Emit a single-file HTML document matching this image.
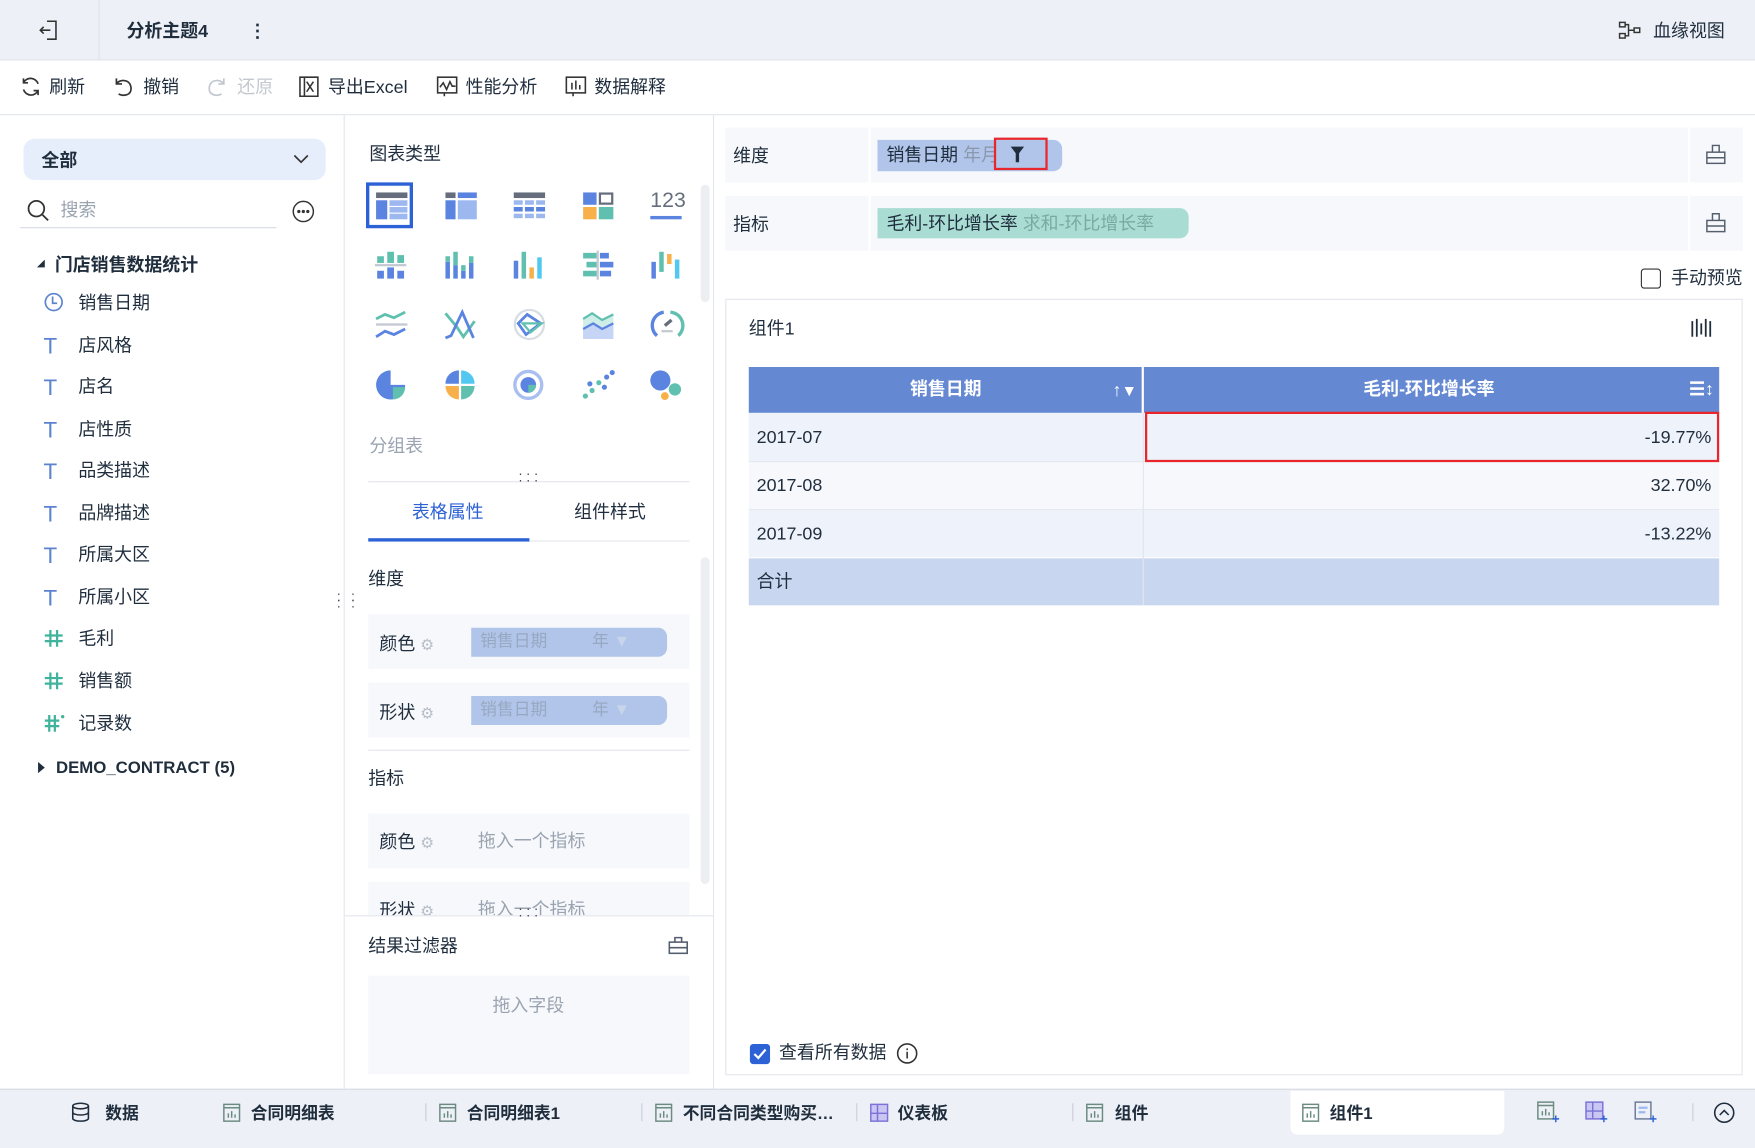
<!DOCTYPE html>
<html><head><meta charset="utf-8">
<style>
*{box-sizing:border-box;margin:0;padding:0}
html,body{width:1755px;height:1148px;overflow:hidden;background:#fff}
#w{position:absolute;left:0;top:0;width:1568px;height:1026px;transform:scale(1.11926,1.11891);transform-origin:0 0;font-family:"Liberation Sans","Noto Sans CJK SC",sans-serif;color:#1f2d3d;font-size:16px}
.a{position:absolute;white-space:nowrap}
.t{line-height:24px}
svg{position:absolute;overflow:visible}
.gray{color:#9aa3b0}
.row{position:absolute;background:#f6f8fc}
.pill{position:absolute;background:#b0c5e9;border-radius:0 8px 8px 0;color:#98a8c2;font-size:15px;line-height:26px}
.ti{position:absolute;left:35px;width:20px;text-align:center;color:#5b83d0;font-size:20px;line-height:24px}
.tab{position:absolute;top:985px;font-weight:bold;font-size:15px;line-height:22px}
</style></head><body><div id="w">

<!-- top bar -->
<div class="a" style="left:0;top:0;width:1568px;height:54px;background:#edf0f6;border-bottom:1px solid #dfe3ea"></div>
<div class="a" style="left:88px;top:0;width:1px;height:54px;background:#dfe3ea"></div>
<svg style="left:35px;top:18px" width="18" height="18" viewBox="0 0 18 18" fill="none" stroke="#333" stroke-width="1.4"><path d="M7 1h8v16H7M1 9h9M4 6L1 9l3 3"/></svg>
<div class="a t" style="left:113px;top:17px;font-weight:bold;font-size:16px">分析主题4</div>
<div class="a t" style="left:222px;top:17px;font-weight:bold">⋮</div>
<svg style="left:1446px;top:19px" width="20" height="16" viewBox="0 0 20 16" fill="none" stroke="#333" stroke-width="1.3"><rect x="1" y="1" width="5" height="4"/><rect x="1" y="11" width="5" height="4"/><rect x="14" y="6" width="5" height="4"/><path d="M6 3h3v10H6M9 8h5"/></svg>
<div class="a t" style="left:1477px;top:17px">血缘视图</div>

<!-- toolbar -->
<div class="a" style="left:0;top:102px;width:1568px;height:1px;background:#e3e6ec"></div>
<svg style="left:18px;top:68px" width="19" height="19" viewBox="0 0 19 19" fill="none" stroke="#333" stroke-width="1.5"><path d="M16 7A7 7 0 0 0 3 6M3 12a7 7 0 0 0 13 1M3 2v4h4M16 17v-4h-4"/></svg>
<div class="a t" style="left:44px;top:67px">刷新</div>
<svg style="left:101px;top:68px" width="19" height="19" viewBox="0 0 19 19" fill="none" stroke="#333" stroke-width="1.5"><path d="M3 2v5h5M3 7c2-4 12-5 13 3s-8 8-11 6"/></svg>
<div class="a t" style="left:128px;top:67px">撤销</div>
<svg style="left:184px;top:68px" width="19" height="19" viewBox="0 0 19 19" fill="none" stroke="#c3c8d0" stroke-width="1.5"><path d="M16 2v5h-5M16 7c-2-4-12-5-13 3s8 8 11 6"/></svg>
<div class="a t" style="left:212px;top:67px;color:#c3c8d0">还原</div>
<svg style="left:267px;top:68px" width="18" height="19" viewBox="0 0 18 19" fill="none" stroke="#333" stroke-width="1.4"><path d="M1 1h4v17H1zM5 1h12v17H5M7 5l6 9M13 5l-6 9"/></svg>
<div class="a t" style="left:293px;top:67px">导出Excel</div>
<svg style="left:390px;top:68px" width="19" height="19" viewBox="0 0 19 19" fill="none" stroke="#333" stroke-width="1.4"><rect x="1" y="1" width="17" height="14"/><path d="M3 10l3-4 3 6 3-7 2 4h3M7 15v3"/></svg>
<div class="a t" style="left:416px;top:67px">性能分析</div>
<svg style="left:505px;top:68px" width="19" height="19" viewBox="0 0 19 19" fill="none" stroke="#333" stroke-width="1.4"><rect x="1" y="1" width="17" height="14"/><path d="M6 6v6M9.5 4v8M13 8v4M7 15v3"/></svg>
<div class="a t" style="left:531px;top:67px">数据解释</div>

<!-- left panel -->
<div class="a" style="left:307px;top:103px;width:1px;height:870px;background:#e3e6ec"></div>
<div class="a" style="left:21px;top:124px;width:270px;height:37px;background:#e6eefc;border-radius:10px"></div>
<div class="a t" style="left:37px;top:133px;font-weight:bold">全部</div>
<svg style="left:262px;top:137px" width="14" height="10" viewBox="0 0 14 10" fill="none" stroke="#333" stroke-width="1.5"><path d="M1 2l6 6 6-6"/></svg>
<svg style="left:24px;top:178px" width="20" height="20" viewBox="0 0 20 20" fill="none" stroke="#333" stroke-width="1.6"><circle cx="8.5" cy="8.5" r="7"/><path d="M14 14l5 5"/></svg>
<div class="a t gray" style="left:54px;top:177px">搜索</div>
<div class="a" style="left:18px;top:203px;width:229px;height:1px;background:#d7dbe2"></div>
<svg style="left:261px;top:179px" width="20" height="20" viewBox="0 0 20 20" fill="none" stroke="#333" stroke-width="1.3"><circle cx="10" cy="10" r="9"/><circle cx="6" cy="10" r=".8" fill="#333"/><circle cx="10" cy="10" r=".8" fill="#333"/><circle cx="14" cy="10" r=".8" fill="#333"/></svg>
<svg style="left:33px;top:232px" width="8" height="8" viewBox="0 0 8 8"><path d="M7 0v7H0z" fill="#1f2d3d"/></svg>
<div class="a t" style="left:49px;top:226px;font-weight:bold">门店销售数据统计</div>
<svg style="left:39px;top:261px" width="18" height="18" viewBox="0 0 18 18" fill="none" stroke="#5b83d0" stroke-width="1.5"><circle cx="9" cy="9" r="7.5"/><path d="M8 4v6h4"/></svg>
<div class="a t" style="left:70px;top:260px">销售日期</div>
<div class="ti" style="top:298px">T</div><div class="a t" style="left:70px;top:298px">店风格</div>
<div class="ti" style="top:335px">T</div><div class="a t" style="left:70px;top:335px">店名</div>
<div class="ti" style="top:373px">T</div><div class="a t" style="left:70px;top:373px">店性质</div>
<div class="ti" style="top:410px">T</div><div class="a t" style="left:70px;top:410px">品类描述</div>
<div class="ti" style="top:448px">T</div><div class="a t" style="left:70px;top:448px">品牌描述</div>
<div class="ti" style="top:485px">T</div><div class="a t" style="left:70px;top:485px">所属大区</div>
<div class="ti" style="top:523px">T</div><div class="a t" style="left:70px;top:523px">所属小区</div>
<svg style="left:40px;top:563px" width="16" height="15" viewBox="0 0 16 15" stroke="#3fb39b" stroke-width="2"><path d="M0 5h16M0 10h16M5 0v15M11 0v15"/></svg><div class="a t" style="left:70px;top:560px">毛利</div>
<svg style="left:40px;top:601px" width="16" height="15" viewBox="0 0 16 15" stroke="#3fb39b" stroke-width="2"><path d="M0 5h16M0 10h16M5 0v15M11 0v15"/></svg><div class="a t" style="left:70px;top:598px">销售额</div>
<svg style="left:40px;top:639px" width="18" height="15" viewBox="0 0 18 15" stroke="#3fb39b" stroke-width="2"><path d="M0 5h13M0 10h13M4 0v15M9 0v15"/><circle cx="16" cy="1.5" r="1.5" fill="#3fb39b" stroke="none"/></svg><div class="a t" style="left:70px;top:636px">记录数</div>
<div class="a" style="left:34px;top:681px;width:0;height:0;border-top:5px solid transparent;border-bottom:5px solid transparent;border-left:6px solid #1f2d3d"></div>
<div class="a t" style="left:50px;top:675px;font-weight:bold;font-size:15px">DEMO_CONTRACT (5)</div>
<div class="a" style="left:301px;top:530px;font-size:12px;line-height:6px;letter-spacing:3px;color:#445">: :<br>: :</div>

<!-- middle panel -->
<div class="a" style="left:637px;top:103px;width:1px;height:870px;background:#e3e6ec"></div>
<div class="a t" style="left:330px;top:127px">图表类型</div>
<div class="a" style="left:327px;top:163px;width:42px;height:41px;border:3px solid #2c62d6"></div>
<div class="a" style="left:626px;top:165px;width:8px;height:105px;background:#eceef2;border-radius:4px"></div>
<svg style="left:335px;top:171px" width="30" height="26"><rect x="1" y="1" width="28" height="5" fill="#666e7e"/><rect x="1" y="8" width="10" height="17" fill="#5b83e0"/><rect x="13" y="8" width="16" height="5" fill="#9db8ef"/><rect x="13" y="14" width="16" height="5" fill="#9db8ef"/><rect x="13" y="20" width="16" height="5" fill="#9db8ef"/></svg>
<svg style="left:397px;top:171px" width="30" height="26"><rect x="1" y="1" width="9" height="5" fill="#666e7e"/><rect x="12" y="1" width="17" height="5" fill="#5b83e0"/><rect x="1" y="8" width="9" height="17" fill="#5b83e0"/><rect x="12" y="8" width="17" height="17" fill="#9db8ef"/></svg>
<svg style="left:458px;top:171px" width="30" height="26"><rect x="1" y="1" width="28" height="5" fill="#666e7e"/><g fill="#9db8ef"><rect x="1" y="8" width="8" height="4"/><rect x="11" y="8" width="8" height="4"/><rect x="21" y="8" width="8" height="4"/><rect x="1" y="20" width="8" height="4"/><rect x="11" y="20" width="8" height="4"/><rect x="21" y="20" width="8" height="4"/></g><g fill="#5b83e0"><rect x="1" y="14" width="8" height="4"/><rect x="11" y="14" width="8" height="4"/><rect x="21" y="14" width="8" height="4"/></g></svg>
<svg style="left:520px;top:171px" width="30" height="26"><rect x="1" y="1" width="12" height="11" fill="#5b83e0"/><rect x="16" y="2" width="11" height="9" fill="none" stroke="#666e7e" stroke-width="2"/><rect x="1" y="14" width="12" height="11" fill="#f8b04a"/><rect x="15" y="14" width="13" height="11" fill="#5fc0af"/></svg>
<div class="a" style="left:581px;top:169px;font-size:19px;line-height:22px;color:#666e7e">123</div>
<div class="a" style="left:581px;top:193px;width:28px;height:3px;background:#5b83e0"></div>
<svg style="left:335px;top:224px" width="30" height="26"><g fill="#5fc0af"><rect x="2" y="5" width="6" height="6"/><rect x="11" y="1" width="6" height="10"/><rect x="20" y="4" width="6" height="7"/></g><rect x="0" y="12" width="28" height="2" fill="#c3c8d2"/><g fill="#5b83e0"><rect x="2" y="18" width="6" height="7"/><rect x="11" y="15" width="6" height="10"/><rect x="20" y="18" width="6" height="7"/></g></svg>
<svg style="left:397px;top:224px" width="30" height="26"><rect x="1" y="10" width="4" height="15" fill="#5b83e0"/><rect x="1" y="5" width="4" height="5" fill="#5fc0af"/><rect x="8" y="13" width="4" height="12" fill="#5b83e0"/><rect x="8" y="1" width="4" height="12" fill="#5fc0af"/><rect x="15" y="18" width="4" height="7" fill="#5b83e0"/><rect x="15" y="13" width="4" height="5" fill="#5fc0af"/><rect x="22" y="11" width="4" height="14" fill="#5b83e0"/><rect x="22" y="5" width="4" height="6" fill="#5fc0af"/></svg>
<svg style="left:458px;top:224px" width="30" height="26"><rect x="1" y="9" width="4" height="16" fill="#5b83e0"/><rect x="8" y="1" width="4" height="24" fill="#5fc0af"/><rect x="15" y="15" width="4" height="10" fill="#f8b04a"/><rect x="22" y="6" width="4" height="19" fill="#52c8f0"/></svg>
<svg style="left:520px;top:224px" width="30" height="26"><g fill="#5fc0af"><rect x="1" y="2" width="12" height="5"/><rect x="4" y="10" width="9" height="5"/><rect x="1" y="18" width="12" height="5"/></g><rect x="13" y="0" width="2" height="26" fill="#c3c8d2"/><g fill="#5b83e0"><rect x="16" y="2" width="8" height="5"/><rect x="16" y="10" width="12" height="5"/><rect x="16" y="18" width="10" height="5"/></g></svg>
<svg style="left:581px;top:224px" width="30" height="26"><rect x="1" y="10" width="4" height="15" fill="#5b83e0"/><rect x="8" y="1" width="4" height="18" fill="#5fc0af"/><rect x="15" y="3" width="4" height="9" fill="#f8b04a"/><rect x="22" y="8" width="4" height="17" fill="#52c8f0"/></svg>
<svg style="left:335px;top:277px" width="30" height="26" fill="none" stroke-width="2.5"><path d="M1 8l8-4 8 3 10-5" stroke="#5fc0af"/><path d="M1 13h28" stroke="#c3c8d2" stroke-width="2"/><path d="M1 24l8-5 8 3 10-5" stroke="#5b83e0"/></svg>
<svg style="left:397px;top:277px" width="30" height="26" fill="none" stroke-width="2.5"><path d="M1 3l10 12 6 9 10-14" stroke="#5fc0af"/><path d="M1 25l5-2 10-21 10 23" stroke="#5b83e0"/></svg>
<svg style="left:458px;top:277px" width="30" height="26" fill="none"><circle cx="15" cy="13" r="13" stroke="#d8dce4" stroke-width="2"/><path d="M5 12l8-8 12 8-13 10z" stroke="#5b83e0" stroke-width="2.5"/><path d="M9 12h17l-10 8z" stroke="#5fc0af" stroke-width="2"/></svg>
<svg style="left:520px;top:277px" width="30" height="26"><path d="M1 8l8-5 9 6 10-5v22H1z" fill="#cfeee7"/><path d="M1 8l8-5 9 6 10-5" stroke="#5fc0af" stroke-width="2" fill="none"/><path d="M1 17l9-5 8 5 10-5v14H1z" fill="#c6d5f5"/><path d="M1 17l9-5 8 5 10-5" stroke="#5b83e0" stroke-width="2" fill="none"/></svg>
<svg style="left:581px;top:277px" width="30" height="26" fill="none" stroke-width="3"><path d="M6 23A12 12 0 0 1 12 2" stroke="#5b83e0"/><path d="M18 2a12 12 0 0 1 7 21" stroke="#5fc0af"/><path d="M10 19h10" stroke="#c3c8d2" stroke-width="2"/><path d="M13 14l6-5" stroke="#666e7e" stroke-width="3"/></svg>
<svg style="left:335px;top:330px" width="30" height="28"><path d="M14 1A13 13 0 1 0 27 14H14z" fill="#5b83e0"/><path d="M16 16h11a11 11 0 0 1-11 11z" fill="#5fc0af"/></svg>
<svg style="left:397px;top:330px" width="30" height="28"><path d="M13 1A12 12 0 0 0 1 13h12z" fill="#5b83e0"/><path d="M15 1a12 12 0 0 1 12 12H15z" fill="#52c8f0"/><path d="M1 15a12 12 0 0 0 12 12V15z" fill="#f8b04a"/><path d="M15 15h12a12 12 0 0 1-12 12z" fill="#5fc0af"/></svg>
<svg style="left:458px;top:330px" width="30" height="28" fill="none"><circle cx="14" cy="14" r="12" stroke="#a9bff0" stroke-width="3"/><circle cx="14" cy="14" r="7" fill="#5b83e0"/><path d="M14 14h7a7 7 0 0 1-7 7z" fill="#5fc0af"/></svg>
<svg style="left:520px;top:330px" width="30" height="28"><g fill="#5fc0af"><circle cx="3" cy="24" r="2.3"/><circle cx="9" cy="19" r="2.3"/><circle cx="15" cy="12" r="2.3"/></g><g fill="#5b83e0"><circle cx="7" cy="13" r="2.3"/><circle cx="20" cy="16" r="2.3"/><circle cx="22" cy="7" r="2.3"/><circle cx="27" cy="3" r="2.3"/></g></svg>
<svg style="left:581px;top:330px" width="30" height="28"><circle cx="9" cy="10" r="9" fill="#5b83e0"/><circle cx="22" cy="18" r="5.5" fill="#5fc0af"/><circle cx="13" cy="24" r="3.5" fill="#f8b04a"/></svg>
<div class="a t" style="left:330px;top:388px;color:#9aa3b0">分组表</div>
<div class="a" style="left:329px;top:430px;width:287px;height:1px;background:#e3e6ec"></div>
<div class="a" style="left:463px;top:420px;font-size:12px;line-height:6px;letter-spacing:3px;color:#445">···<br>···</div>
<div class="a t" style="left:368px;top:447px;color:#2c62d6">表格属性</div>
<div class="a t" style="left:513px;top:447px">组件样式</div>
<div class="a" style="left:329px;top:483px;width:287px;height:1px;background:#e3e6ec"></div>
<div class="a" style="left:329px;top:481px;width:144px;height:3px;background:#2c62d6"></div>
<div class="a" style="left:626px;top:498px;width:8px;height:292px;background:#eceef2;border-radius:4px"></div>
<div class="a t" style="left:329px;top:507px">维度</div>
<div class="row" style="left:329px;top:549px;width:287px;height:49px"></div>
<div class="a t" style="left:339px;top:564px">颜色 <span style="color:#b8bec8;font-size:14px">⚙</span></div>
<div class="pill" style="left:421px;top:561px;width:175px;height:26px"><span style="margin-left:8px">销售日期</span><span style="position:absolute;left:108px">年 <span style="color:#c8d4ea">▼</span></span></div>
<div class="row" style="left:329px;top:610px;width:287px;height:49px"></div>
<div class="a t" style="left:339px;top:625px">形状 <span style="color:#b8bec8;font-size:14px">⚙</span></div>
<div class="pill" style="left:421px;top:622px;width:175px;height:26px"><span style="margin-left:8px">销售日期</span><span style="position:absolute;left:108px">年 <span style="color:#c8d4ea">▼</span></span></div>
<div class="a" style="left:329px;top:670px;width:287px;height:1px;background:#e3e6ec"></div>
<div class="a t" style="left:329px;top:685px">指标</div>
<div class="row" style="left:329px;top:727px;width:287px;height:49px"></div>
<div class="a t" style="left:339px;top:741px">颜色 <span style="color:#b8bec8;font-size:14px">⚙</span></div>
<div class="a t gray" style="left:427px;top:741px">拖入一个指标</div>
<div class="a" style="left:329px;top:788px;width:287px;height:30px;overflow:hidden"><div class="row" style="left:0;top:0;width:287px;height:49px"></div><div class="a t" style="left:10px;top:14px">形状 <span style="color:#b8bec8;font-size:14px">⚙</span></div><div class="a t gray" style="left:98px;top:14px">拖入一个指标</div></div>
<div class="a" style="left:308px;top:818px;width:329px;height:1px;background:#e3e6ec"></div>
<div class="a" style="left:463px;top:809px;font-size:12px;line-height:6px;letter-spacing:3px;color:#445">···<br>···</div>
<div class="a t" style="left:329px;top:835px">结果过滤器</div>
<svg style="left:597px;top:837px" width="18" height="16" viewBox="0 0 18 16" fill="none" stroke="#555e6e" stroke-width="1.4"><rect x="1" y="5" width="16" height="10"/><path d="M6 5V1h6v4M1 10h16"/></svg>
<div class="row" style="left:329px;top:872px;width:287px;height:88px"></div>
<div class="a t gray" style="left:440px;top:888px">拖入字段</div>

<!-- right -->
<div class="row" style="left:648px;top:114px;width:909px;height:49px"></div>
<div class="a" style="left:776px;top:114px;width:2px;height:49px;background:#fff"></div>
<div class="a" style="left:1508px;top:114px;width:2px;height:49px;background:#fff"></div>
<div class="a t" style="left:655px;top:129px">维度</div>
<div class="a" style="left:784px;top:125px;width:165px;height:28px;background:#b0c5e9;border-radius:0 8px 8px 0"></div>
<div class="a t" style="left:792px;top:128px">销售日期 <span style="color:#8a97ad">年月</span></div>
<div class="a" style="left:888px;top:123px;width:48px;height:29px;border:2px solid #e8262c"></div>
<svg style="left:903px;top:131px" width="12" height="14" viewBox="0 0 12 14"><path d="M0 0h12L7.5 6v8h-3V6z" fill="#1f2d3d"/></svg>
<svg style="left:1524px;top:129px" width="18" height="18" viewBox="0 0 18 18" fill="none" stroke="#555e6e" stroke-width="1.3"><rect x="1" y="7" width="16" height="10"/><path d="M6 7V1h6v6M1 12h16"/></svg>
<div class="row" style="left:648px;top:175px;width:909px;height:49px"></div>
<div class="a" style="left:776px;top:175px;width:2px;height:49px;background:#fff"></div>
<div class="a" style="left:1508px;top:175px;width:2px;height:49px;background:#fff"></div>
<div class="a t" style="left:655px;top:190px">指标</div>
<div class="a" style="left:784px;top:186px;width:278px;height:27px;background:#a9ddd4;border-radius:0 8px 8px 0"></div>
<div class="a t" style="left:792px;top:189px">毛利-环比增长率 <span style="color:#7aa9a1">求和-环比增长率</span></div>
<svg style="left:1524px;top:190px" width="18" height="18" viewBox="0 0 18 18" fill="none" stroke="#555e6e" stroke-width="1.3"><rect x="1" y="7" width="16" height="10"/><path d="M6 7V1h6v6M1 12h16"/></svg>
<div class="a" style="left:1466px;top:240px;width:18px;height:18px;border:1.5px solid #333;border-radius:3px"></div>
<div class="a t" style="left:1493px;top:238px">手动预览</div>

<div class="a" style="left:648px;top:267px;width:909px;height:694px;border:1px solid #e3e6ec"></div>
<div class="a t" style="left:669px;top:283px">组件1</div>
<svg style="left:1511px;top:284px" width="18" height="18" viewBox="0 0 18 18" stroke="#1f2d3d" stroke-width="1.6"><path d="M1 3v14M5 1v16M9 5v10M13 1v16M17 3v14"/></svg>
<div class="a" style="left:669px;top:328px;width:867px;height:41px;background:#6588d2"></div>
<div class="a" style="left:1020px;top:328px;width:2px;height:41px;background:#fff"></div>
<div class="a t" style="left:813px;top:337px;color:#fff;font-weight:bold">销售日期</div>
<div class="a t" style="left:994px;top:337px;color:#fff;font-weight:bold">↑<span style="font-size:14px">▼</span></div>
<div class="a t" style="left:1218px;top:337px;color:#fff;font-weight:bold">毛利-环比增长率</div>
<div class="a t" style="left:1509px;top:337px;color:#fff;font-weight:bold">☰↕</div>
<div class="a" style="left:669px;top:369px;width:867px;height:43px;background:#eef2fa"></div>
<div class="a" style="left:669px;top:413px;width:867px;height:42px;background:#f6f8fc"></div>
<div class="a" style="left:669px;top:456px;width:867px;height:42px;background:#eef2fa"></div>
<div class="a" style="left:669px;top:499px;width:867px;height:42px;background:#c8d6ef"></div>
<div class="a" style="left:669px;top:412px;width:867px;height:1px;background:#e4e8ef"></div>
<div class="a" style="left:669px;top:455px;width:867px;height:1px;background:#e4e8ef"></div>
<div class="a" style="left:1021px;top:369px;width:1px;height:172px;background:#e0e5ee"></div>
<div class="a t" style="left:676px;top:380px">2017-07</div>
<div class="a t" style="left:676px;top:423px">2017-08</div>
<div class="a t" style="left:676px;top:466px">2017-09</div>
<div class="a t" style="left:676px;top:509px">合计</div>
<div class="a t" style="right:39px;top:380px">-19.77%</div>
<div class="a t" style="right:39px;top:423px">32.70%</div>
<div class="a t" style="right:39px;top:466px">-13.22%</div>
<div class="a" style="left:1023px;top:368px;width:513px;height:45px;border:2px solid #e8262c"></div>
<div class="a" style="left:670px;top:933px;width:18px;height:18px;background:#2c62d6;border-radius:3px"></div>
<svg style="left:673px;top:937px" width="12" height="10" viewBox="0 0 12 10" fill="none" stroke="#fff" stroke-width="2"><path d="M1 5l3.5 3.5L11 1"/></svg>
<div class="a t" style="left:696px;top:930px">查看所有数据</div>
<svg style="left:801px;top:932px" width="19" height="19" viewBox="0 0 19 19" fill="none" stroke="#333" stroke-width="1.4"><circle cx="9.5" cy="9.5" r="8.5"/><path d="M9.5 8v6M9.5 5v1.5"/></svg>

<!-- bottom bar -->
<div class="a" style="left:0;top:973px;width:1568px;height:53px;background:#edf0f6;border-top:1px solid #d6dae2"></div>
<div class="a" style="left:1153px;top:975px;width:191px;height:39px;background:#fff;border-radius:0 0 6px 6px"></div>
<svg style="left:64px;top:985px" width="16" height="18" viewBox="0 0 16 18" fill="none" stroke="#1f2d3d" stroke-width="1.4"><ellipse cx="8" cy="3.5" rx="7" ry="2.5"/><path d="M1 3.5v11c0 1.4 3 2.5 7 2.5s7-1.1 7-2.5v-11M1 9c0 1.4 3 2.5 7 2.5S15 10.4 15 9"/></svg>
<div class="tab" style="left:94px">数据</div>
<svg style="left:199px;top:986px" width="16" height="17" viewBox="0 0 16 17" fill="none" stroke="#6b8a80" stroke-width="1.3"><rect x="1" y="1" width="14" height="15"/><path d="M1 4h14M5 13V9M8 13V7M11 13v-3"/></svg><div class="tab" style="left:224px">合同明细表</div>
<div class="a" style="left:380px;top:986px;width:1px;height:16px;background:#ccd"></div>
<svg style="left:392px;top:986px" width="16" height="17" viewBox="0 0 16 17" fill="none" stroke="#6b8a80" stroke-width="1.3"><rect x="1" y="1" width="14" height="15"/><path d="M1 4h14M5 13V9M8 13V7M11 13v-3"/></svg><div class="tab" style="left:417px">合同明细表1</div>
<div class="a" style="left:573px;top:986px;width:1px;height:16px;background:#ccd"></div>
<svg style="left:585px;top:986px" width="16" height="17" viewBox="0 0 16 17" fill="none" stroke="#6b8a80" stroke-width="1.3"><rect x="1" y="1" width="14" height="15"/><path d="M1 4h14M5 13V9M8 13V7M11 13v-3"/></svg><div class="tab" style="left:610px">不同合同类型购买…</div>
<div class="a" style="left:765px;top:986px;width:1px;height:16px;background:#ccd"></div>
<svg style="left:777px;top:986px" width="17" height="17" viewBox="0 0 17 17" fill="#c9c6f2" stroke="#7a72d8" stroke-width="1.3"><rect x="1" y="1" width="15" height="15"/><path d="M7 1v15M1 9h15" fill="none"/></svg><div class="tab" style="left:802px">仪表板</div>
<div class="a" style="left:958px;top:986px;width:1px;height:16px;background:#ccd"></div>
<svg style="left:970px;top:986px" width="16" height="17" viewBox="0 0 16 17" fill="none" stroke="#6b8a80" stroke-width="1.3"><rect x="1" y="1" width="14" height="15"/><path d="M1 4h14M5 13V9M8 13V7M11 13v-3"/></svg><div class="tab" style="left:996px">组件</div>
<svg style="left:1163px;top:986px" width="16" height="17" viewBox="0 0 16 17" fill="none" stroke="#6b8a80" stroke-width="1.3"><rect x="1" y="1" width="14" height="15"/><path d="M1 4h14M5 13V9M8 13V7M11 13v-3"/></svg><div class="tab" style="left:1188px">组件1</div>
<svg style="left:1373px;top:984px" width="20" height="20" viewBox="0 0 20 20" fill="none" stroke="#6b8a80" stroke-width="1.3"><rect x="1" y="1" width="14" height="15"/><path d="M1 4h14M5 13V9M8 13V7M11 13v-3"/><path d="M17 13v6M14 16h6" stroke="#2c62d6"/></svg>
<svg style="left:1416px;top:984px" width="20" height="20" viewBox="0 0 20 20" fill="#c9c6f2" stroke="#7a72d8" stroke-width="1.3"><rect x="1" y="1" width="15" height="15"/><path d="M7 1v15M1 9h15" fill="none"/><path d="M17 13v6M14 16h6" stroke="#2c62d6"/></svg>
<svg style="left:1460px;top:984px" width="20" height="20" viewBox="0 0 20 20" fill="none" stroke="#6b7a9a" stroke-width="1.3"><rect x="1" y="1" width="14" height="15"/><path d="M4 6h8M4 10h6" stroke="#9db8ef" stroke-width="2"/><path d="M17 13v6M14 16h6" stroke="#2c62d6"/></svg>
<div class="a" style="left:1512px;top:986px;width:1px;height:16px;background:#ccd"></div>
<svg style="left:1531px;top:985px" width="19" height="19" viewBox="0 0 19 19" fill="none" stroke="#1f2d3d" stroke-width="1.4"><circle cx="9.5" cy="9.5" r="8.5"/><path d="M5.5 11.5l4-4 4 4"/></svg>

</div></body></html>
